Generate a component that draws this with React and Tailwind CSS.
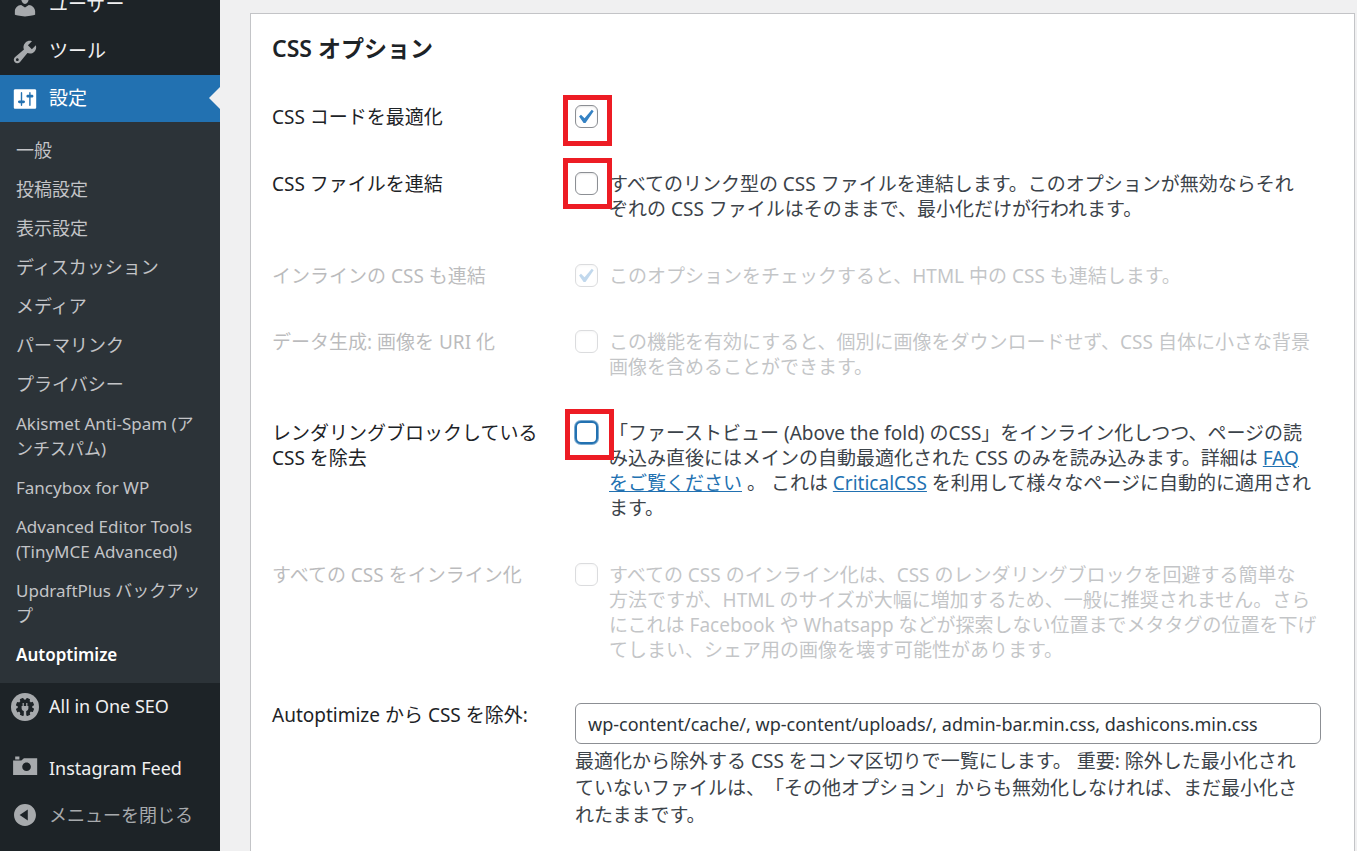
import React, { useState } from "react";

const submenu = [
  "一般",
  "投稿設定",
  "表示設定",
  "ディスカッション",
  "メディア",
  "パーマリンク",
  "プライバシー"
];

const pluginSubmenu = [
  "Akismet Anti-Spam (アンチスパム)",
  "Fancybox for WP",
  "Advanced Editor Tools (TinyMCE Advanced)",
  "UpdraftPlus バックアップ",
  "Autoptimize"
];

const icons = {
  users:
    "M10 9.25c-2.27 0-2.73-3.44-2.73-3.44C7 4.02 7.82 2 9.97 2c2.16 0 2.98 2.02 2.71 3.81 0 0-.41 3.44-2.68 3.44zm0 2.57L12.72 10c2.39 0 4.52 2.33 4.52 4.53v2.49s-3.65 1.13-7.24 1.13c-3.65 0-7.24-1.13-7.24-1.13v-2.49c0-2.25 1.94-4.48 4.47-4.48z",
  tools:
    "M16.68 9.77c-1.34 1.34-3.3 1.67-4.95.99l-5.41 6.52c-.99.99-2.59.99-3.58 0s-.99-2.59 0-3.57l6.52-5.42c-.68-1.65-.35-3.61.99-4.95 1.28-1.28 3.12-1.62 4.72-1.06l-2.89 2.89 2.82 2.82 2.86-2.87c.53 1.58.18 3.39-1.08 4.65zM3.81 16.21c.4.39 1.04.39 1.43 0 .4-.4.4-1.04 0-1.43-.39-.4-1.03-.4-1.43 0-.39.39-.39 1.03 0 1.43z",
  settings:
    "M18 16V4c0-.55-.45-1-1-1H3c-.55 0-1 .45-1 1v12c0 .55.45 1 1 1h14c.55 0 1-.45 1-1zM8 11h1c.55 0 1 .45 1 1s-.45 1-1 1H8v1.5c0 .28-.22.5-.5.5s-.5-.22-.5-.5V13H6c-.55 0-1-.45-1-1s.45-1 1-1h1V5.5c0-.28.22-.5.5-.5s.5.22.5.5V11zm5-2h-1c-.55 0-1-.45-1-1s.45-1 1-1h1V5.5c0-.28.22-.5.5-.5s.5.22.5.5V7h1c.55 0 1 .45 1 1s-.45 1-1 1h-1v5.5c0 .28-.22.5-.5.5s-.5-.22-.5-.5V9z",
  camera:
    "M6 3.2V1.1H3v2.1h3zM18.7 14.2V2.3H9.2L7.4 4H1.5v10.2h17.2zM11.1 5.3c1.75 0 3.1 1.4 3.1 3.1s-1.35 3.1-3.1 3.1-3.1-1.4-3.1-3.1 1.35-3.1 3.1-3.1z",
  collapse:
    "M10 2.16c4.33 0 7.84 3.51 7.84 7.84s-3.51 7.84-7.84 7.84S2.16 14.33 2.16 10 5.71 2.16 10 2.16zm2 11.72V6.12L6.18 9.97z"
};

const MenuIcon = ({ name }) => (
  <svg viewBox="0 0 20 20" className="size-7 shrink-0" fill="currentColor" fillRule="evenodd" aria-hidden="true">
    <path d={icons[name]} />
  </svg>
);

// round badge with a dark gear and a plug in its centre
const SeoIcon = () => (
  <svg viewBox="0 0 28 28" className="size-7 shrink-0" aria-hidden="true">
    <circle cx="14" cy="14" r="14" fill="currentColor" />
    <g fill="#1d2327">
      <circle cx="14" cy="14" r="7.4" />
      {[22, 67, 112, 157, 202, 247, 292, 337].map(angle => (
        <rect key={angle} x="12" y="4.8" width="4" height="4" rx="0.8" transform={`rotate(${angle} 14 14)`} />
      ))}
    </g>
    <path
      fill="currentColor"
      d="M11.6 10h1.2v3h2.4v-3h1.2v3h1v2.2c0 1.5-1 2.5-2.2 2.8V23h-2.4v-5c-1.2-.3-2.2-1.3-2.2-2.8V13h1z"
    />
  </svg>
);

const MenuItem = ({ icon, children, current, plugin }) => (
  <li className={current ? "relative bg-[#2271b1]" : ""}>
    <a
      href="#"
      className={`flex h-[47px] items-center gap-2.5 pl-[11px] ${plugin ? "text-[18px]" : "text-[19px]"} ${
        current ? "text-white" : "text-[#f0f0f1]"
      }`}
    >
      <span className={current ? "text-white" : "text-[#a7aaad]"}>{icon}</span>
      {children}
    </a>
    {current && (
      <span className="absolute right-0 top-3 border-y-11 border-r-11 border-y-transparent border-r-[#f0f0f1]" />
    )}
  </li>
);

const SubmenuItem = ({ label, plugin }) => (
  <li>
    <a
      href="#"
      className={`block break-all px-4 py-[7px] leading-[25px] ${plugin ? "text-[17px]" : "text-[18px]"} ${
        label === "Autoptimize" ? "font-semibold text-white" : "text-[#c3c4c7]"
      }`}
    >
      {label}
    </a>
  </li>
);

const Sidebar = () => (
  <nav className="w-[220px] shrink-0 overflow-hidden bg-[#1d2327]">
    <ul className="-mt-[19px]">
      <MenuItem icon={<MenuIcon name="users" />}>ユーザー</MenuItem>
      <MenuItem icon={<MenuIcon name="tools" />}>ツール</MenuItem>
      <MenuItem icon={<MenuIcon name="settings" />} current>設定</MenuItem>
      <li className="bg-[#2c3338] py-[9px]">
        <ul>
          {submenu.map(label => (
            <SubmenuItem key={label} label={label} />
          ))}
          {pluginSubmenu.map(label => (
            <SubmenuItem key={label} label={label} plugin />
          ))}
        </ul>
      </li>
      <MenuItem icon={<SeoIcon />} plugin>All in One SEO</MenuItem>
      <li className="h-[15px]" />
      <MenuItem icon={<MenuIcon name="camera" />} plugin>Instagram Feed</MenuItem>
      <li>
        <button type="button" className="flex h-[46px] items-center gap-2.5 pl-[11px] text-[18px] text-[#a7aaad]">
          <MenuIcon name="collapse" />
          メニューを閉じる
        </button>
      </li>
    </ul>
  </nav>
);

const Checkbox = ({ id, defaultChecked, disabled, focused, mark }) => {
  const [checked, setChecked] = useState(Boolean(defaultChecked));

  return (
    <span className="relative flex h-[23px] w-[23px] shrink-0 items-center">
      <input
        id={id}
        type="checkbox"
        checked={checked}
        disabled={disabled}
        onChange={e => setChecked(e.target.checked)}
        className={`size-[23px] appearance-none rounded-md bg-white ${
          focused
            ? "border-2 border-[#2271b1] ring-1 ring-[#2271b1]/60"
            : "border border-[#8c8f94] shadow-[inset_0_1px_2px_rgba(0,0,0,0.1)]"
        }`}
      />
      {checked && (
        <svg viewBox="0 0 20 20" className="pointer-events-none absolute -left-1 -top-0.5 size-7" aria-hidden="true">
          <path d="M14.83 4.89l1.34.94-5.81 8.38H9.02L5.78 9.67l1.34-1.25 2.57 2.4z" fill="#3582c4" />
        </svg>
      )}
      {mark && (
        <span className={`pointer-events-none absolute z-10 h-[51px] w-[49px] border-5 border-[#ed1c24] ${mark}`} />
      )}
    </span>
  );
};

const Row = ({ id, label, children, disabled, checkbox }) => (
  <div className={`grid grid-cols-[303px_1fr] pt-[21px] ${disabled ? "pb-5 opacity-30" : "pb-[21px]"}`}>
    <label htmlFor={id} className="text-[#1d2327]">
      {label}
    </label>
    <div className="flex gap-[11px]">
      <Checkbox id={id} disabled={disabled} {...checkbox} />
      {children && <p className="whitespace-nowrap">{children}</p>}
    </div>
  </div>
);

const Link = ({ children }) => (
  <a href="#" className="text-[#2271b1] underline">
    {children}
  </a>
);

export default function App() {
  const [excluded, setExcluded] = useState(
    "wp-content/cache/, wp-content/uploads/, admin-bar.min.css, dashicons.min.css"
  );

  return (
    <div
      lang="ja"
      className="flex min-h-screen bg-[#f0f0f1] font-['Noto_Sans','Noto_Sans_CJK_JP',sans-serif] text-[19px] leading-[25px] text-[#3c434a] [text-spacing-trim:space-all]"
    >
      <Sidebar />
      <main className="flex min-w-0 flex-1 flex-col pl-[30px] pr-0.5 pt-[13px]">
        <form className="flex-1 border border-b-0 border-[#c3c4c7] bg-white pl-[21px] pr-[33px]">
          <h2 className="pb-[22px] pt-5 text-[23px] font-semibold leading-[28px] text-[#1d2327]">
            CSS オプション
          </h2>

          <Row
            id="css-optimize"
            label="CSS コードを最適化"
            checkbox={{ defaultChecked: true, mark: "-left-3 -top-2.5" }}
          />
          <Row
            id="css-aggregate"
            label="CSS ファイルを連結"
            checkbox={{ mark: "-left-3 -top-3.5" }}
          >
            すべてのリンク型の CSS ファイルを連結します。このオプションが無効ならそれ
            <br />
            ぞれの CSS ファイルはそのままで、最小化だけが行われます。
          </Row>
          <Row id="css-inline" label="インラインの CSS も連結" disabled checkbox={{ defaultChecked: true }}>
            このオプションをチェックすると、HTML 中の CSS も連結します。
          </Row>
          <Row id="css-datauris" label="データ生成: 画像を URI 化" disabled>
            この機能を有効にすると、個別に画像をダウンロードせず、CSS 自体に小さな背景
            <br />
            画像を含めることができます。
          </Row>
          <Row
            id="css-defer"
            label={<>レンダリングブロックしている<br />CSS を除去</>}
            checkbox={{ focused: true, mark: "-left-2.5 -top-3" }}
          >
            「ファーストビュー (Above the fold) のCSS」をインライン化しつつ、ページの読
            <br />
            み込み直後にはメインの自動最適化された CSS のみを読み込みます。詳細は <Link>FAQ</Link>
            <br />
            <Link>をご覧ください</Link> 。 これは <Link>CriticalCSS</Link> を利用して様々なページに自動的に適用され
            <br />
            ます。
          </Row>
          <Row id="css-inline-all" label="すべての CSS をインライン化" disabled>
            すべての CSS のインライン化は、CSS のレンダリングブロックを回避する簡単な
            <br />
            方法ですが、HTML のサイズが大幅に増加するため、一般に推奨されません。さら
            <br />
            にこれは Facebook や Whatsapp などが探索しない位置までメタタグの位置を下げ
            <br />
            てしまい、シェア用の画像を壊す可能性があります。
          </Row>

          <div className="grid grid-cols-[303px_1fr] py-5">
            <label htmlFor="css-exclude" className="text-[#1d2327]">
              Autoptimize から CSS を除外:
            </label>
            <div>
              <input
                id="css-exclude"
                type="text"
                value={excluded}
                onChange={e => setExcluded(e.target.value)}
                className="h-[41px] w-full rounded-md border border-[#8c8f94] bg-white px-3 text-[18px] text-[#2c3338]"
              />
              <p className="mt-1 whitespace-nowrap leading-[27px]">
                最適化から除外する CSS をコンマ区切りで一覧にします。 重要: 除外した最小化され
                <br />
                ていないファイルは、「その他オプション」からも無効化しなければ、まだ最小化さ
                <br />
                れたままです。
              </p>
            </div>
          </div>
        </form>
      </main>
    </div>
  );
}
